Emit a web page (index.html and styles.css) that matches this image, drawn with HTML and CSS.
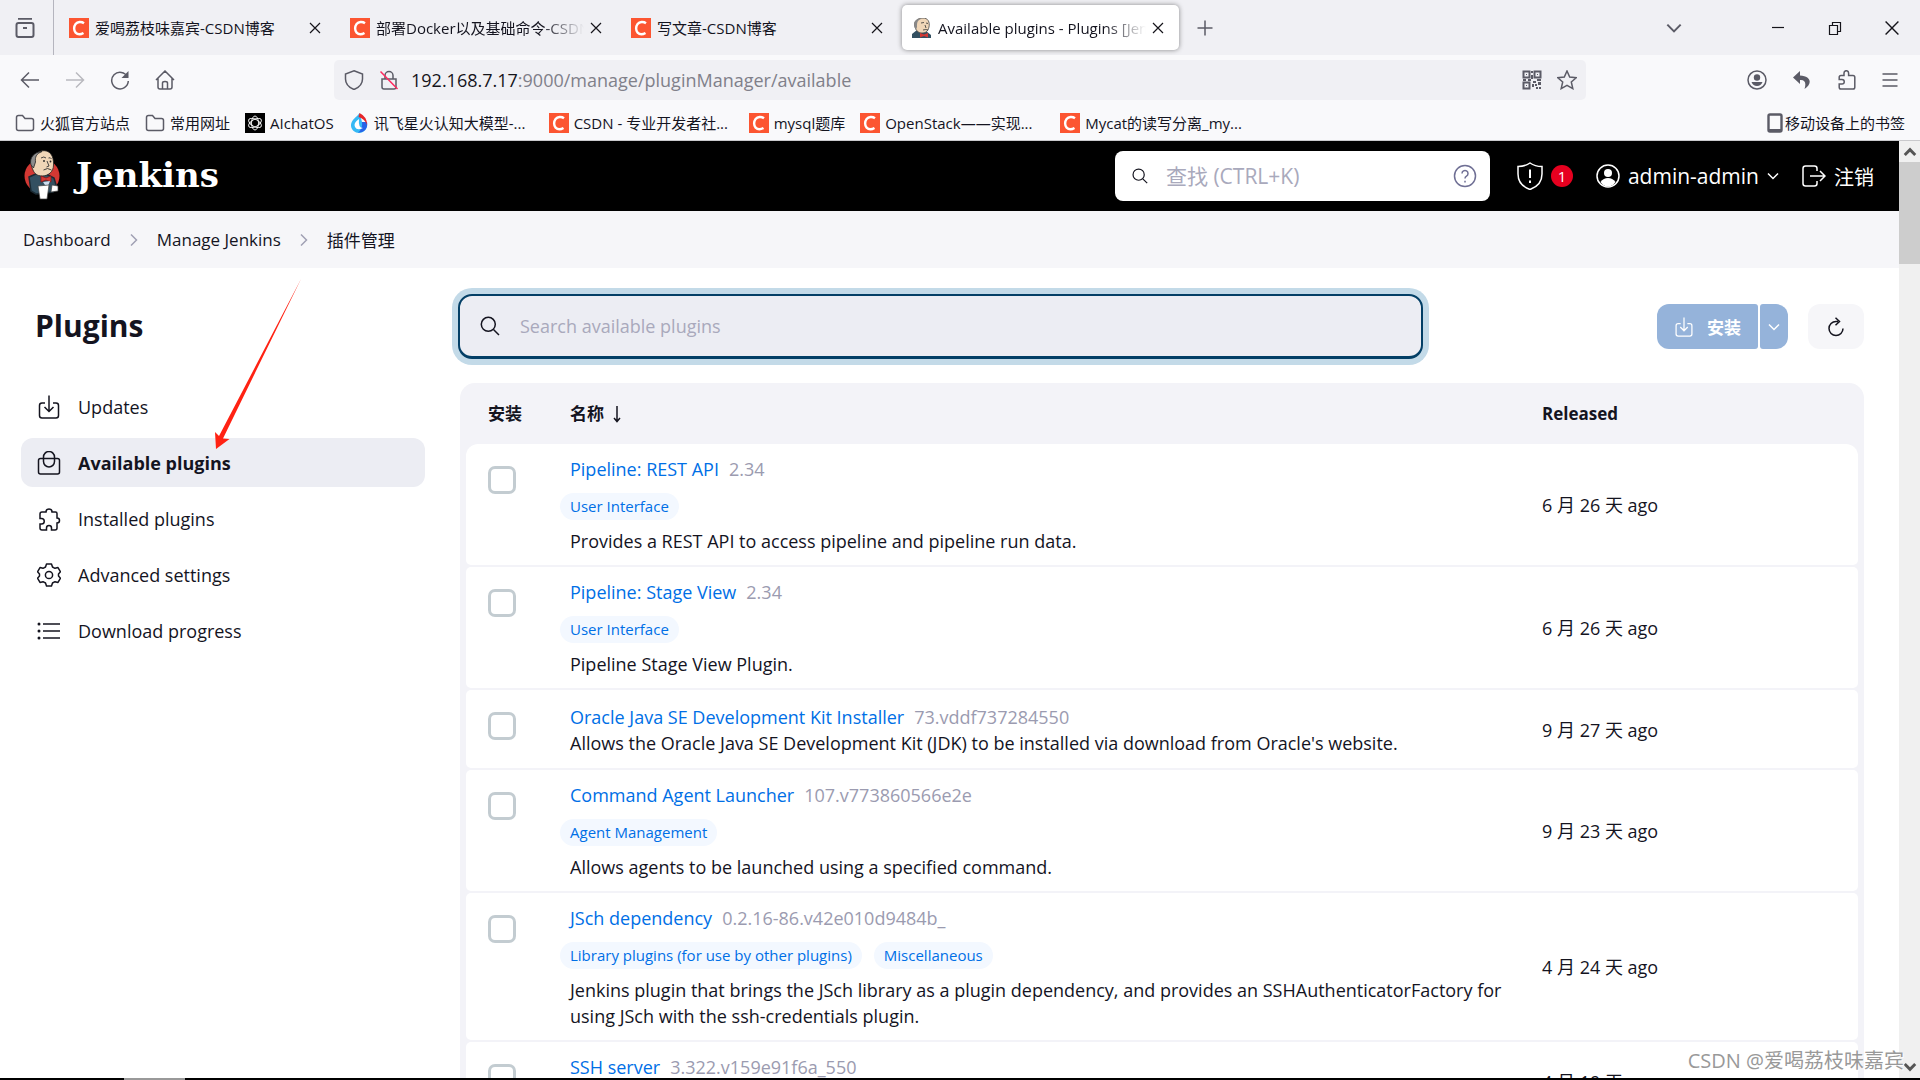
FILE: index.html
```html
<!DOCTYPE html>
<html lang="zh-CN">
<head>
<meta charset="utf-8">
<title>Available plugins - Plugins [Jenkins]</title>
<link rel="stylesheet" href="styles.css">
</head>
<body>
<svg class="defs" aria-hidden="true">
  <symbol id="c-logo" viewBox="0 0 20 20"><rect width="20" height="20" fill="#fc5531"/><path d="M15 5.200C12.500 3.400 8.600 3.500 6.600 6C4.600 8.600 4.700 12.600 6.600 14.600C8.600 16.700 12 16.500 14.500 15" fill="none" stroke="#fff" stroke-width="2.400"/></symbol>
  <symbol id="folder" viewBox="0 0 20 20"><path d="M1.500 4.500q0-2 2-2h4l2.500 3h6.500q2 0 2 2v8q0 2-2 2h-13q-2 0-2-2z"/></symbol>
  <symbol id="close" viewBox="0 0 12 12"><path d="M1 1l10 10M11 1L1 11"/></symbol>
  <symbol id="chev-down" viewBox="0 0 12 12"><path d="M1 3.500l5 5 5-5"/></symbol>
  <symbol id="chev-right" viewBox="0 0 12 12"><path d="M3 0.500l5.500 5.500L3 11.500"/></symbol>
  <symbol id="search" viewBox="0 0 20 20"><circle cx="8.300" cy="8.300" r="7"/><path d="M13.500 13.500l5.500 5.500"/></symbol>
  <symbol id="download" viewBox="0 0 24 24"><path d="M8 8H5a2.500 2.500 0 0 0-2.500 2.500v10A2.500 2.500 0 0 0 5 23h14a2.500 2.500 0 0 0 2.500-2.500v-10A2.500 2.500 0 0 0 19 8h-3M12 0.500V16M7.500 12l4.500 4.500L16.500 12"/></symbol>
  <symbol id="butler" viewBox="0 0 36 50">
    <ellipse cx="18" cy="26" rx="17.500" ry="17" fill="#d33833"/>
    <path d="M5 27L14 23L24 25L30 28L33 38L29 42L12 44L7 41Z" fill="#335061" stroke="#1b2a33"/>
    <path d="M9 20C6 15 7 4 17 1C26-1 30 6 29.500 15C29.500 22 24 26 18 26C13 26 10 23 9 20Z" fill="#f0d6b7" stroke="#222" stroke-width=".8"/>
    <path d="M7 15C5 8 10 2 18 1.500C12 4 11 7 11.500 12L9.500 18Z" fill="#8d8d8d" stroke="#222" stroke-width=".8"/>
    <path d="M17 8q3-2 5 0M24.500 8q2-1 3 1M23 11l2 5-2.500 1M19.500 20q4-3 8 0" fill="none" stroke="#333" stroke-width=".9"/>
    <circle cx="20" cy="11" r=".9" fill="#222"/><circle cx="26.500" cy="11.500" r=".9" fill="#222"/>
    <path d="M17 26l5 2 5-2v6l-5-2-5 2z" fill="#d33833" stroke="#811" stroke-width=".7"/>
    <path d="M19 32l7-1-2 5-3-1z" fill="#cde"/>
    <path d="M14 36l11-1-2 14h-7zM28 35l6 1v5l-7 1z" fill="#fff" stroke="#444" stroke-width=".7"/>
  </symbol>
  <symbol id="butler-face" viewBox="0 0 20 20">
    <path d="M0 20v-4l5-4 9 1 5 4v3z" fill="#335061"/>
    <path d="M3 9C1 3 6 0 11 0S18 4 17 9s-4 6-7 6-6-2-7-6z" fill="#f0d6b7" stroke="#444" stroke-width=".8"/>
    <path d="M2.500 9C1 4 4 0 10 .500C5 2 5 5 5 9l-1 3z" fill="#888"/>
    <path d="M9 5l3-.500M14 5l2 .500M13 7l1 3M11 12q3-1 5 0" fill="none" stroke="#333" stroke-width=".8"/>
    <path d="M8 15l4 1.500 4-1.500v4.500l-4-1.500-4 1.500z" fill="#d33833"/>
  </symbol>
</svg>

<div class="browser">
  <header class="tabs">
    <button class="icon-btn view-btn" aria-label="Firefox View"><svg class="i20 chrome-i thick" viewBox="0 0 20 20"><path d="M3 .800h14M3.500 5h13q2 0 2 2v10q0 2-2 2h-13q-2 0-2-2V7q0-2 2-2zM8 10h4"/></svg></button>
    <nav class="tab-list">
      <div class="tab"><svg class="i20"><use href="#c-logo"/></svg><a href="#" class="tab-text">爱喝荔枝味嘉宾-CSDN博客</a><button class="icon-btn" aria-label="关闭"><svg class="i12 dark-i"><use href="#close"/></svg></button></div>
      <div class="tab"><svg class="i20"><use href="#c-logo"/></svg><a href="#" class="tab-text fade">部署Docker以及基础命令-CSDN博客</a><button class="icon-btn" aria-label="关闭"><svg class="i12 dark-i"><use href="#close"/></svg></button></div>
      <div class="tab"><svg class="i20"><use href="#c-logo"/></svg><a href="#" class="tab-text">写文章-CSDN博客</a><button class="icon-btn" aria-label="关闭"><svg class="i12 dark-i"><use href="#close"/></svg></button></div>
      <div class="tab active"><svg class="i20"><use href="#butler-face"/></svg><a href="#" class="tab-text fade">Available plugins - Plugins [Jenkins]</a><button class="icon-btn" aria-label="关闭"><svg class="i12 dark-i"><use href="#close"/></svg></button></div>
    </nav>
    <button class="icon-btn plus" aria-label="新标签页"><svg class="i16 chrome-i" viewBox="0 0 16 16"><path d="M8 .500v15M.500 8h15"/></svg></button>
    <div class="win">
      <button class="icon-btn" aria-label="列出标签页"><svg class="i16 chrome-i"><use href="#chev-down"/></svg></button>
      <span class="win-gap"></span>
      <button class="icon-btn" aria-label="最小化"><svg class="i14 dark-i" viewBox="0 0 14 14"><path d="M1 6.500h12"/></svg></button>
      <button class="icon-btn" aria-label="还原"><svg class="i14 dark-i" viewBox="0 0 14 14"><path d="M1.500 4.500h8v9h-8zM4.500 4V1.500h8v9H10"/></svg></button>
      <button class="icon-btn" aria-label="关闭窗口"><svg class="i14 dark-i" viewBox="0 0 12 12"><path d="M.500 .500l11 11M11.500 .500l-11 11"/></svg></button>
    </div>
  </header>

  <div class="toolbar">
    <div class="nav-left">
      <button class="icon-btn" aria-label="后退"><svg class="i20 chrome-i" viewBox="0 0 20 20"><path d="M19 10H1.500M9 2.500L1.500 10 9 17.500"/></svg></button>
      <button class="icon-btn faint" aria-label="前进"><svg class="i20 chrome-i" viewBox="0 0 20 20"><path d="M1 10h17.500M11 2.500l7.500 7.500-7.500 7.500"/></svg></button>
      <button class="icon-btn" aria-label="刷新"><svg class="i20 chrome-i" viewBox="0 0 20 20"><path d="M17.500 7A8.300 8.300 0 1 0 18.300 11"/><path class="solid" d="M18.500 1v7h-7z"/></svg></button>
      <button class="icon-btn" aria-label="主页"><svg class="i20 chrome-i" viewBox="0 0 20 20"><path d="M1 10l9-9 9 9M3 8.500V17q0 2 2 2h10q2 0 2-2V8.500M7.500 19v-6q0-1.500 2.500-1.500t2.500 1.500v6"/></svg></button>
    </div>
    <div class="urlbar">
      <svg class="i20 chrome-i" viewBox="0 0 20 20"><path d="M10 .800L18.500 4v5c0 5-3.500 8.500-8.500 10.500C5 17.500 1.500 14 1.500 9V4z"/></svg>
      <svg class="i20 chrome-i" viewBox="0 0 20 20"><path d="M3 9h14v8q0 2-2 2H5q-2 0-2-2zM6 9V5.500a4 4 0 0 1 8 0V9"/><path class="slash" d="M1.500 1.500l17 17.500"/></svg>
      <div class="url"><span class="host">192.168.7.17</span>:9000/manage/pluginManager/available</div>
      <svg class="i20 chrome-i" viewBox="0 0 20 20"><path d="M1.500 1.500h6v6h-6zM12.500 1.500h6v6h-6zM1.500 12.500h6v6h-6z" stroke-width="2"/><path class="solid" d="M4 4h1v1H4zM15 4h1v1h-1zM4 15h1v1H4zM9 1h2v2H9zM9 5h2v4H9zM1 9h3v2H1zM6 9h3v2H6zM11 11h3v2h-3zM15 9h4v2h-4zM10 14h2v3h-2zM13 14h2v2h-2zM16 12h3v3h-3zM14 17h2v2h-2zM17 17h2v2h-2z"/></svg>
      <svg class="i20 chrome-i" viewBox="0 0 20 20"><path d="M10 1l2.700 6 6.500.700-4.900 4.300 1.500 6.600L10 15.300l-5.800 3.300 1.500-6.600L.800 7.700l6.500-.700z"/></svg>
    </div>
    <div class="nav-right">
      <button class="icon-btn" aria-label="账户"><svg class="i20 chrome-i" viewBox="0 0 20 20"><circle cx="10" cy="10" r="9"/><circle class="solid" cx="10" cy="7.500" r="3.200"/><path class="solid" d="M4.500 12h11q-1.500 4-5.500 4t-5.500-4z"/></svg></button>
      <button class="icon-btn" aria-label="撤销"><svg class="i20 chrome-i" viewBox="0 0 20 20"><path class="solid" d="M8 1L1 7.500 8 14v-4c5-.500 6.500 3 4.500 9 8-5 7-13-4.500-13.500z"/></svg></button>
      <button class="icon-btn" aria-label="扩展"><svg class="i20 chrome-i" viewBox="0 0 20 20"><path d="M7 5.500V3a2.300 2.300 0 0 1 4.600 0V5.500H16q1.800 0 1.800 1.800v9.900q0 1.800-1.800 1.800H4q-1.800 0-1.800-1.800V14H5a2 2 0 0 0 0-4.500H2.200V7.300Q2.200 5.500 4 5.500z"/></svg></button>
      <button class="icon-btn" aria-label="菜单"><svg class="i16 chrome-i" viewBox="0 0 16 16"><path d="M.500 2h15M.500 8h15M.500 14h15"/></svg></button>
    </div>
  </div>

  <nav class="bookmarks">
    <a href="#"><svg class="i20 chrome-i"><use href="#folder"/></svg>火狐官方站点</a>
    <a href="#"><svg class="i20 chrome-i"><use href="#folder"/></svg>常用网址</a>
    <a href="#"><svg class="i20" viewBox="0 0 20 20"><rect width="20" height="20" fill="#000" stroke="none"/><g stroke="#fff" stroke-width=".9"><ellipse cx="10" cy="10" rx="3.500" ry="7"/><ellipse cx="10" cy="10" rx="3.500" ry="7" transform="rotate(60 10 10)"/><ellipse cx="10" cy="10" rx="3.500" ry="7" transform="rotate(120 10 10)"/></g></svg>AIchatOS</a>
    <a href="#" class="long"><svg class="i20" viewBox="0 0 20 20"><g stroke="none"><path d="M10.500 0C8 4 1.500 7 2 13C2.500 17 6 20 10 20S17.500 17 18 13L13 9Z" fill="#35b9f5"/><path d="M18 9C19.500 15 15 20 9 19.500Q14 16 13 9Z" fill="#2763e8"/><path d="M10.500 0q8 4 7.500 12Q16 6 9.500 4z" fill="#e5262a"/><path d="M10 6q-6 4-4 8t8 1q-5 0-4-9z" fill="#fff"/></g></svg>讯飞星火认知大模型-...</a>
    <a href="#" class="long"><svg class="i20"><use href="#c-logo"/></svg>CSDN - 专业开发者社...</a>
    <a href="#"><svg class="i20"><use href="#c-logo"/></svg>mysql题库</a>
    <a href="#" class="long"><svg class="i20"><use href="#c-logo"/></svg>OpenStack——实现...</a>
    <a href="#" class="long"><svg class="i20"><use href="#c-logo"/></svg>Mycat的读写分离_my...</a>
    <a href="#" class="mobile"><svg class="i20 chrome-i" viewBox="0 0 20 20"><path d="M5 1.500h10q1.500 0 1.500 1.500v14q0 1.500-1.500 1.500H5q-1.500 0-1.500-1.500V3Q3.500 1.500 5 1.500z" stroke-width="2.400"/><path class="solid" d="M4 16h12v3H4z"/></svg>移动设备上的书签</a>
  </nav>

  <div class="viewport">
    <div class="page">
      <header class="jenkins-header">
        <a href="#" class="logo"><svg class="butler"><use href="#butler"/></svg>Jenkins</a>
        <label class="top-search"><svg class="i16"><use href="#search"/></svg><input type="text" placeholder="查找 (CTRL+K)" aria-label="查找"><svg class="i24 help" viewBox="0 0 24 24"><circle cx="12" cy="12" r="10.500"/><path d="M9 9.500a3 3 0 1 1 4.500 2.600Q12 13 12 14.500M12 16.800v1.600"/></svg></label>
        <a href="#" class="head-link"><svg class="i28" viewBox="0 0 28 28"><path d="M14 1Q19 4.500 26 4.500V12C26 20 21 25 14 27.500C7 25 2 20 2 12V4.500Q9 4.500 14 1z"/><path d="M14 7.500v8.500M14 18.500v2.500" stroke-width="2"/></svg><span class="count">1</span></a>
        <a href="#" class="head-link user"><svg class="i24" viewBox="0 0 24 24"><circle cx="12" cy="12" r="11"/><circle class="solid" cx="12" cy="9" r="4"/><path class="solid" d="M4.500 18q3-4 7.500-4t7.500 4q-3 4.500-7.500 4.500T4.500 18z"/></svg>admin-admin<svg class="i12"><use href="#chev-down"/></svg></a>
        <a href="#" class="head-link"><svg class="i24" viewBox="0 0 24 24"><path d="M15 7V4.500Q15 2 12.500 2h-9Q1 2 1 4.500v15Q1 22 3.500 22h9q2.500 0 2.500-2.500V17M8 12h15M18 7l5 5-5 5"/></svg>注销</a>
      </header>
      <nav class="crumbs"><a href="#">Dashboard</a><svg class="i12"><use href="#chev-right"/></svg><a href="#">Manage Jenkins</a><svg class="i12"><use href="#chev-right"/></svg><a href="#">插件管理</a></nav>
      <div class="content">
        <aside class="side">
          <h1>Plugins</h1>
          <nav>
            <a href="#"><svg class="i24"><use href="#download"/></svg>Updates</a>
            <a href="#" class="current"><svg class="i24" viewBox="0 0 24 24"><path d="M3.500 7.500h17q2 0 2 2V21q0 2-2 2h-17q-2 0-2-2V9.500q0-2 2-2zM6.500 7.500V6a5.500 5.500 0 0 1 11 0v4.500a5.500 5.500 0 0 1-11 0z"/></svg>Available plugins</a>
            <a href="#"><svg class="i24" viewBox="0 0 24 24"><path d="M9 5a3 3 0 0 1 6 0h3.500q1.500 0 1.500 1.500V11a2.500 2.500 0 1 1 0 5v5q0 2-2 2h-3.500v-2a2.500 2.500 0 0 0-5 0v2H5q-2 0-2-2v-4h1.500a2.500 2.500 0 0 0 0-5.500H3V7q0-2 2-2z"/></svg>Installed plugins</a>
            <a href="#"><svg class="i24" viewBox="0 0 24 24"><path d="M9.500 1h5l1 3 2.500 1.300 3-.700 2.500 4.200-2 2.200v2l2 2.200-2.500 4.200-3-.700-2.500 1.300-1 3h-5l-1-3L6 18.700l-3 .700L.500 15.200l2-2.200v-2l-2-2.200L3 4.600l3 .700L8.500 4z" stroke-linejoin="round"/><circle cx="12" cy="12" r="3.600"/></svg>Advanced settings</a>
            <a href="#"><svg class="i24" viewBox="0 0 24 24"><path d="M6 5h17M6 12h17M6 19h17"/><circle class="solid" cx="2" cy="5" r="1.500"/><circle class="solid" cx="2" cy="12" r="1.500"/><circle class="solid" cx="2" cy="19" r="1.500"/></svg>Download progress</a>
          </nav>
        </aside>
        <main>
          <div class="bar">
            <label class="plugin-search"><svg class="i20"><use href="#search"/></svg><input type="text" placeholder="Search available plugins" aria-label="Search available plugins"></label>
            <div class="actions">
              <div class="split"><button class="install"><svg class="i20"><use href="#download"/></svg>安装</button><button class="more" aria-label="更多"><svg class="i12"><use href="#chev-down"/></svg></button></div>
              <button class="refresh" aria-label="刷新"><svg class="i20" viewBox="0 0 20 20"><path d="M12 4.500H10a7 7 0 1 0 7 7M9.500.800l4 3.700-4 3.700"/></svg></button>
            </div>
          </div>
          <table>
            <colgroup><col class="c-check"><col><col class="c-date"></colgroup>
            <thead><tr><th>安装</th><th>名称 <svg class="sort" viewBox="0 0 10 18"><path d="M5 1v15M2 13l3 3.500L8 13"/></svg></th><th>Released</th></tr></thead>
            <tbody>
              <tr><td><input type="checkbox" aria-label="Pipeline: REST API"></td><td><div><a href="#">Pipeline: REST API</a><span class="ver">2.34</span></div><div class="tags"><a href="#">User Interface</a></div><div>Provides a REST API to access pipeline and pipeline run data.</div></td><td>6 月 26 天 ago</td></tr>
              <tr><td><input type="checkbox" aria-label="Pipeline: Stage View"></td><td><div><a href="#">Pipeline: Stage View</a><span class="ver">2.34</span></div><div class="tags"><a href="#">User Interface</a></div><div>Pipeline Stage View Plugin.</div></td><td>6 月 26 天 ago</td></tr>
              <tr><td><input type="checkbox" aria-label="Oracle Java SE Development Kit Installer"></td><td><div><a href="#">Oracle Java SE Development Kit Installer</a><span class="ver">73.vddf737284550</span></div><div>Allows the Oracle Java SE Development Kit (JDK) to be installed via download from Oracle's website.</div></td><td>9 月 27 天 ago</td></tr>
              <tr><td><input type="checkbox" aria-label="Command Agent Launcher"></td><td><div><a href="#">Command Agent Launcher</a><span class="ver">107.v773860566e2e</span></div><div class="tags"><a href="#">Agent Management</a></div><div>Allows agents to be launched using a specified command.</div></td><td>9 月 23 天 ago</td></tr>
              <tr><td><input type="checkbox" aria-label="JSch dependency"></td><td><div><a href="#">JSch dependency</a><span class="ver">0.2.16-86.v42e010d9484b_</span></div><div class="tags"><a href="#">Library plugins (for use by other plugins)</a><a href="#">Miscellaneous</a></div><div>Jenkins plugin that brings the JSch library as a plugin dependency, and provides an SSHAuthenticatorFactory for using JSch with the ssh-credentials plugin.</div></td><td>4 月 24 天 ago</td></tr>
              <tr><td><input type="checkbox" aria-label="SSH server"></td><td><div><a href="#">SSH server</a><span class="ver">3.322.v159e91f6a_550</span></div></td><td>4 月 19 天 ago</td></tr>
            </tbody>
          </table>
        </main>
      </div>
    </div>
    <div class="scroll"><svg class="i14" viewBox="0 0 12 12"><path d="M1.500 8.500L6 4l4.500 4.500"/></svg><span class="thumb"></span><svg class="i14 end" viewBox="0 0 12 12"><path d="M1.500 3.500L6 8l4.500-4.500"/></svg></div>
  </div>
  <div class="taskbar"><span></span></div>
  <svg class="arrow" viewBox="0 0 88 172"><path d="M86 0L8 159.500l6.500.500L1 170 0 153l4 4z" fill="#ff2213"/></svg>
  <div class="watermark">CSDN @爱喝荔枝味嘉宾</div>
</div>
</body>
</html>
```
FILE: styles.css
```css
* { box-sizing: border-box; }
body { margin: 0; font-family: "Open Sans", "Noto Sans CJK SC", sans-serif; font-size: 18px; color: #14141f; background: #fff; }
a { color: inherit; text-decoration: none; }
button, input { font: inherit; color: inherit; }
button { padding: 0; border: 0; background: none; display: flex; align-items: center; justify-content: center; }
svg { flex: none; fill: none; stroke: currentColor; stroke-width: 1.5; }
.defs { position: absolute; width: 0; height: 0; }
.solid { fill: currentColor; stroke: none; }
#c-logo, #butler, #butler-face { stroke: none; }
.i12 { width: 12px; height: 12px; }
.i14 { width: 14px; height: 14px; }
.i16 { width: 16px; height: 16px; }
.i20 { width: 20px; height: 20px; }
.i24 { width: 24px; height: 24px; }
.i28 { width: 28px; height: 28px; }
.chrome-i { color: #5b5b66; }
.thick { stroke-width: 2; }
.dark-i { color: #15141a; stroke-width: 1.2; }

.browser { position: relative; height: 100vh; display: flex; flex-direction: column; overflow: hidden; }

.tabs { display: flex; height: 55px; flex: none; background: #f0f0f4; font-size: 15px; }
.view-btn { width: 54px; border-right: 1px solid #b5b5be; padding-right: 4px; }
.tab-list { display: flex; align-items: center; gap: 4px; padding-left: 5px; }
.tab { display: flex; align-items: center; gap: 6px; width: 277px; height: 45px; padding: 0 15px 0 10px; border-radius: 5px; white-space: nowrap; }
.tab.active { background: #fff; box-shadow: 0 0 5px rgba(0, 0, 0, .45); }
.tab-text { flex: 1; overflow: hidden; }
.fade { -webkit-mask-image: linear-gradient(to right, #000 80%, transparent); mask-image: linear-gradient(to right, #000 80%, transparent); }
.plus { width: 52px; }
.win { display: flex; align-items: center; margin-left: auto; }
.win .icon-btn { width: 57px; height: 55px; }
.win-gap { width: 47px; }

.toolbar { display: flex; align-items: center; height: 50px; flex: none; background: #f9f9fb; }
.nav-left { display: flex; gap: 25px; width: 334px; padding-left: 20px; }
.faint { opacity: .4; }
.urlbar { display: flex; flex: 1; align-items: center; gap: 15px; height: 40px; padding: 0 9px 0 10px; border-radius: 5px; background: #f0f0f4; }
.slash { stroke: #ff2a5f; }
.url { flex: 1; margin-left: -3px; color: #80808a; }
.host { color: #15141a; }
.nav-right { display: flex; align-items: center; justify-content: flex-end; gap: 25px; width: 334px; padding-right: 22px; }

.bookmarks { display: flex; align-items: center; gap: 15px; height: 35px; flex: none; padding: 0 15px; background: #f9f9fb; font-size: 15px; white-space: nowrap; }
.bookmarks a { display: flex; align-items: center; gap: 5px; }
.bookmarks .long { width: 185px; }
.bookmarks .mobile { margin-left: auto; gap: 0; }

.viewport { display: flex; flex: 1; min-height: 0; border-top: 1px solid #c9c9cc; }
.page { flex: 1; overflow: hidden; }
.jenkins-header { display: flex; align-items: center; height: 70px; padding: 0 25px 0 24px; background: #000; color: #fff; font-size: 20px; }
.logo { display: flex; align-items: center; gap: 16px; margin-right: auto; padding-bottom: 2px; font: bold 34px "DejaVu Serif", serif; }
.butler { width: 36px; height: 50px; }
.top-search { display: flex; align-items: center; width: 375px; height: 50px; margin-right: 26px; padding: 0 13px 0 17px; border-radius: 8px; background: #fff; color: #14141f; }
.top-search input { flex: 1; min-width: 0; padding: 0 0 0 18px; border: 0; background: none; outline: 0; font-size: 21px; }
input::placeholder { color: #a9a9bc; opacity: 1; }
.help { color: #6f6f94; }
.head-link { display: flex; align-items: center; gap: 8px; margin-right: 23px; white-space: nowrap; }
.head-link:last-child { margin-right: 0; }
.user { font-size: 21px; }
.count { width: 22px; height: 22px; margin-left: -1px; border-radius: 50%; background: #e6001f; font-size: 15px; line-height: 22px; text-align: center; }

.crumbs { display: flex; align-items: center; gap: 17px; height: 57px; padding-left: 23px; background: #f6f6f9; font-size: 17px; }
.crumbs svg { color: #a0a0b4; }

.content { display: flex; padding-right: 35px; }
.side { width: 460px; padding: 36px 35px 0 21px; }
.side h1 { margin: 0 0 34px 14px; font-size: 30px; line-height: 44px; }
.side nav { display: flex; flex-direction: column; gap: 7px; }
.side nav a { display: flex; align-items: center; gap: 17px; height: 49px; padding-left: 16px; border-radius: 12px; }
.side .current { background: #ecedf3; font-weight: bold; }

main { flex: 1; min-width: 0; padding-top: 26px; }
.bar { display: flex; align-items: center; justify-content: space-between; margin-bottom: 24px; }
.plugin-search { display: flex; align-items: center; gap: 20px; width: 965px; height: 65px; margin-left: -2px; padding: 0 20px; border: 2px solid #033f66; border-bottom-width: 3px; border-radius: 14px; background: #ecedf3; box-shadow: 0 0 0 6px #c3dae8; }
.plugin-search input { flex: 1; border: 0; padding: 0; background: none; outline: 0; }
.actions { display: flex; gap: 20px; }
.split { display: flex; gap: 2px; color: #fff; }
.split button { height: 45px; background: #95b3da; }
.split .install { width: 101px; gap: 13px; border-radius: 12px 3px 3px 12px; font-size: 17px; font-weight: bold; }
.split .more { width: 28px; border-radius: 3px 12px 12px 3px; }
.refresh { width: 56px; height: 45px; border-radius: 12px; background: #f6f6f9; }

table { width: 100%; table-layout: fixed; border-spacing: 0 2px; padding: 0 6px 2px; border-radius: 15px 15px 0 0; background: #f3f3f8; line-height: 26px; }
.c-check { width: 82px; }
.c-date { width: 338px; }
th { height: 57px; padding: 0 22px; font-size: 17px; text-align: left; }
td { height: 78px; padding: 12px 8px 11px 22px; background: #fff; }
td:first-child { padding-top: 22px; vertical-align: top; border-radius: 5px 0 0 5px; }
td:last-child { border-radius: 0 5px 5px 0; }
tbody tr:first-child td:first-child { border-top-left-radius: 12px; }
tbody tr:first-child td:last-child { border-top-right-radius: 12px; }
tbody tr:last-child td:nth-child(2) { vertical-align: top; }
td a { color: #006fe6; }
.sort { width: 10px; height: 18px; margin-left: 4px; vertical-align: -3px; }
.ver { margin-left: 10px; color: #9b9bb0; }
.tags { display: flex; gap: 12px; margin: 11px 0 8px -10px; }
.tags a { height: 27px; padding: 0 10px; border-radius: 14px; background: #f3f8ff; font-size: 15px; }
td input { display: block; appearance: none; width: 28px; height: 28px; margin: 0; border: 3px solid #c3ccd1; border-radius: 7px; }

.scroll { display: flex; flex-direction: column; align-items: center; width: 21px; padding: 4px 0; background: #f0f0f0; color: #555; }
.scroll svg { stroke-width: 2.5; }
.thumb { width: 21px; height: 102px; margin-top: 3px; background: #cdcdcd; }
.end { margin-top: auto; }
.taskbar { height: 2px; flex: none; background: #000; }
.taskbar span { display: block; width: 61px; height: 2px; margin-left: 124px; background: #999; }

.arrow { position: absolute; left: 215px; top: 279px; width: 88px; height: 172px; stroke: none; }
.watermark { position: absolute; right: 16px; bottom: 6px; font-size: 20px; color: #999; text-shadow: 1px 1px 1px #fff; white-space: nowrap; }
```
